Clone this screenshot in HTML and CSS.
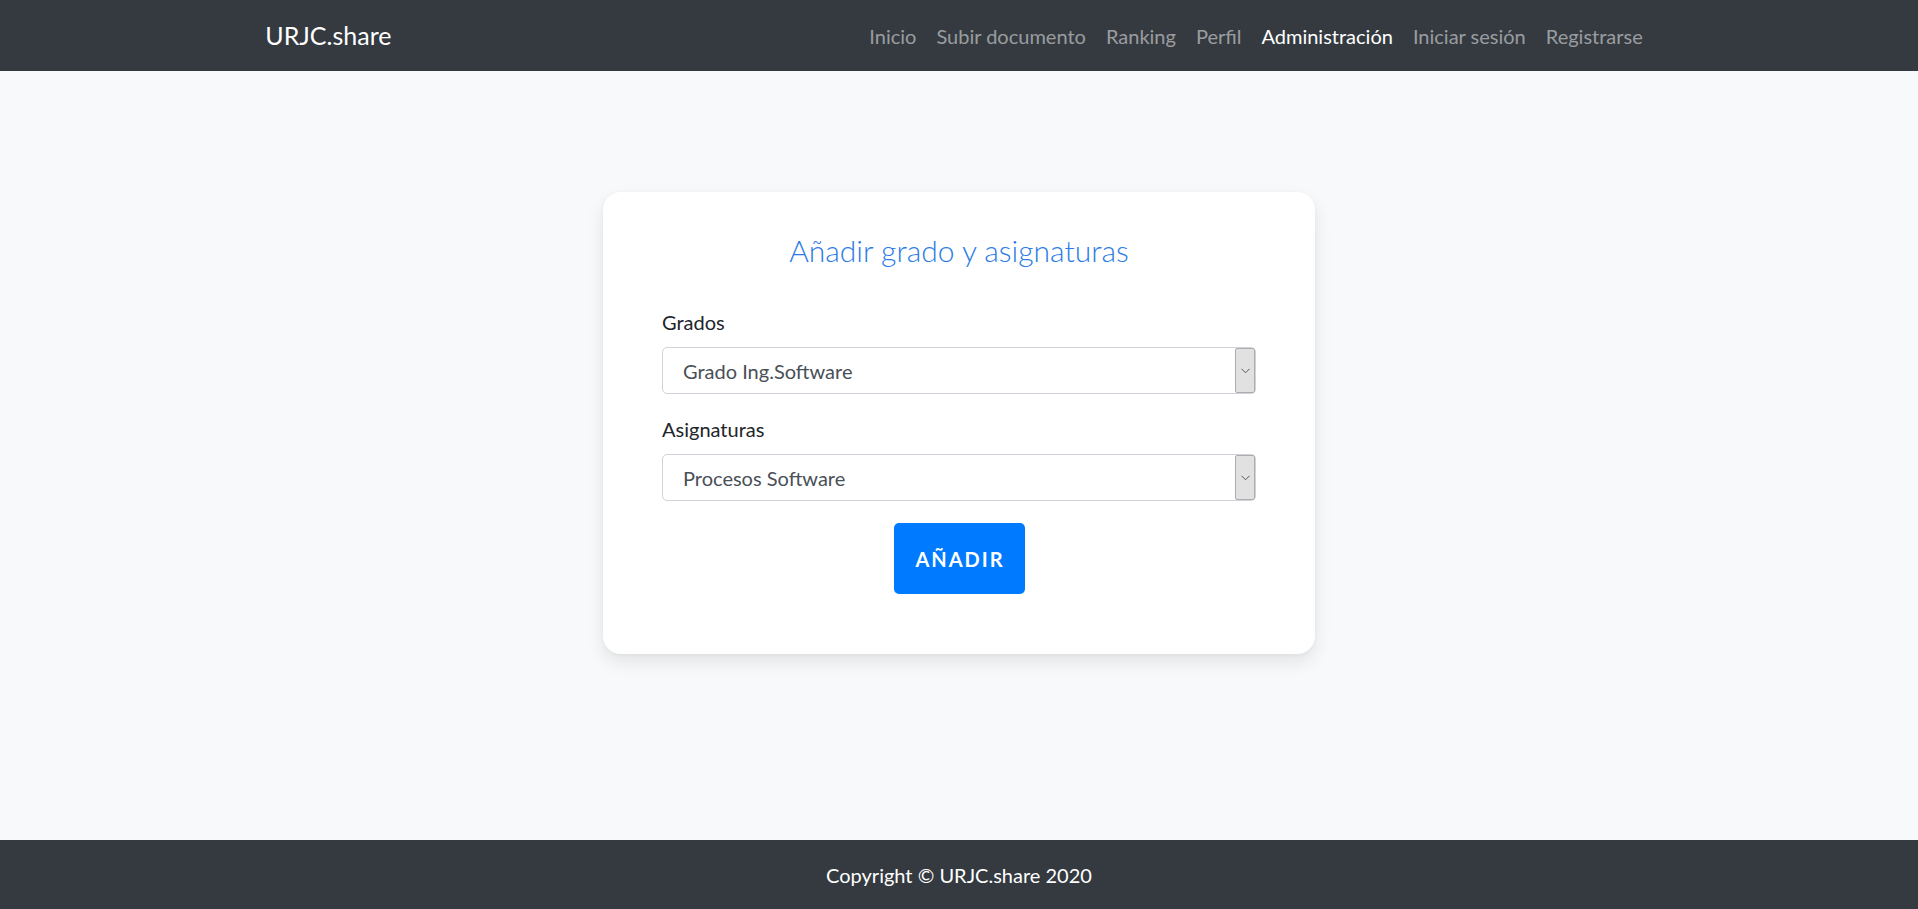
FILE: index.html
```html
<!DOCTYPE html>
<html lang="es">
<head>
<meta charset="utf-8">
<title>URJC.share - Administración</title>
<link rel="stylesheet" href="styles.css">
</head>
<body>
<header class="navbar">
  <div class="container nav-inner">
    <a class="brand" href="#">URJC.share</a>
    <nav class="nav-links">
      <a class="nav-link" href="#">Inicio</a>
      <a class="nav-link" href="#">Subir documento</a>
      <a class="nav-link" href="#">Ranking</a>
      <a class="nav-link" href="#">Perfil</a>
      <a class="nav-link active" href="#">Administración</a>
      <a class="nav-link" href="#">Iniciar sesión</a>
      <a class="nav-link" href="#">Registrarse</a>
    </nav>
  </div>
</header>
<main class="main">
  <section class="card">
    <h4 class="card-title">Añadir grado y asignaturas</h4>
    <form class="form">
      <div class="form-group">
        <label class="form-label" for="grados">Grados</label>
        <div class="select-wrap">
          <select id="grados" class="form-select">
            <option>Grado Ing.Software</option>
          </select>
          <span class="select-arrow"><svg width="9" height="6" viewBox="0 0 9 6"><path d="M0.5 0.8 L4.5 4.8 L8.5 0.8" fill="none" stroke="#555" stroke-width="1"/></svg></span>
        </div>
      </div>
      <div class="form-group">
        <label class="form-label" for="asignaturas">Asignaturas</label>
        <div class="select-wrap">
          <select id="asignaturas" class="form-select">
            <option>Procesos Software</option>
          </select>
          <span class="select-arrow"><svg width="9" height="6" viewBox="0 0 9 6"><path d="M0.5 0.8 L4.5 4.8 L8.5 0.8" fill="none" stroke="#555" stroke-width="1"/></svg></span>
        </div>
      </div>
      <div class="actions">
        <button type="button" class="btn-primary">AÑADIR</button>
      </div>
    </form>
  </section>
</main>
<footer class="footer">
  <p class="footer-text">Copyright © URJC.share 2020</p>
</footer>
</body>
</html>
```

FILE: styles.css
```css
* { box-sizing: border-box; }
html, body { height: 100%; }
body {
  margin: 0;
  font-family: Lato, "Open Sans", "Noto Sans", sans-serif;
  font-size: 20px;
  line-height: 1.5;
  color: #212529;
  background: #f8f9fa;
  display: flex;
  flex-direction: column;
  min-height: 100vh;
}
a { text-decoration: none; }

.navbar {
  background: #343a40;
  height: 71px;
  flex: 0 0 auto;
}
.container {
  width: 1425px;
  margin: 0 auto;
  padding: 0 18.75px;
}
.nav-inner {
  height: 100%;
  display: flex;
  align-items: center;
  justify-content: space-between;
}
.brand {
  color: #fff;
  font-size: 25px;
  line-height: 1;
  padding-bottom: 1px;
}
.nav-links {
  display: flex;
  align-items: center;
}
.nav-link {
  color: rgba(255,255,255,.5);
  padding: 0 10px;
  font-size: 20px;
  line-height: 30px;
}
.nav-link.active { color: #fff; }

.main {
  flex: 1 0 auto;
  padding-top: 121px;
}
.card {
  width: 712px;
  margin: 0 auto;
  background: #fff;
  border-radius: 18px;
  box-shadow: 0 8px 18px rgba(0,0,0,.09), 0 1px 4px rgba(0,0,0,.04);
  padding: 40px 59px 60px;
}
.card-title {
  margin: 0 0 39px;
  text-align: center;
  font-weight: 300;
  font-size: 30px;
  line-height: 36px;
  color: #2b7be6;
}
.form { margin: 0; }
.form-group { margin-bottom: 20px; }
.form-group + .form-group { margin-bottom: 22px; }
.form-label {
  display: block;
  margin-bottom: 10px;
  font-size: 20px;
  line-height: 30px;
  color: #212529;
}
.select-wrap { position: relative; }
.form-select {
  display: block;
  width: 100%;
  height: 47px;
  padding: 0 40px 0 20px;
  font-family: inherit;
  font-size: 20px;
  color: #495057;
  background: #fff;
  border: 1px solid #ced4da;
  border-radius: 5px;
  -webkit-appearance: none;
  appearance: none;
}
.select-arrow {
  position: absolute;
  top: 1px;
  right: 1px;
  bottom: 1px;
  width: 20px;
  background: #e1e1e1;
  border: 1px solid #adadad;
  border-radius: 2px;
  display: flex;
  align-items: center;
  justify-content: center;
  pointer-events: none;
}
.actions {
  display: flex;
  justify-content: center;
}
.btn-primary {
  width: 131px;
  height: 71px;
  background: #007bff;
  color: #fff;
  border: none;
  border-radius: 5px;
  font-family: inherit;
  font-weight: 700;
  font-size: 20px;
  letter-spacing: 2px;
  padding: 0 0 0 2px;
  cursor: pointer;
}

.footer {
  flex: 0 0 auto;
  height: 69px;
  background: #343a40;
  display: flex;
  align-items: center;
  justify-content: center;
}
.footer-text {
  margin: 0;
  color: #fff;
  font-size: 20px;
  line-height: 30px;
}
```
